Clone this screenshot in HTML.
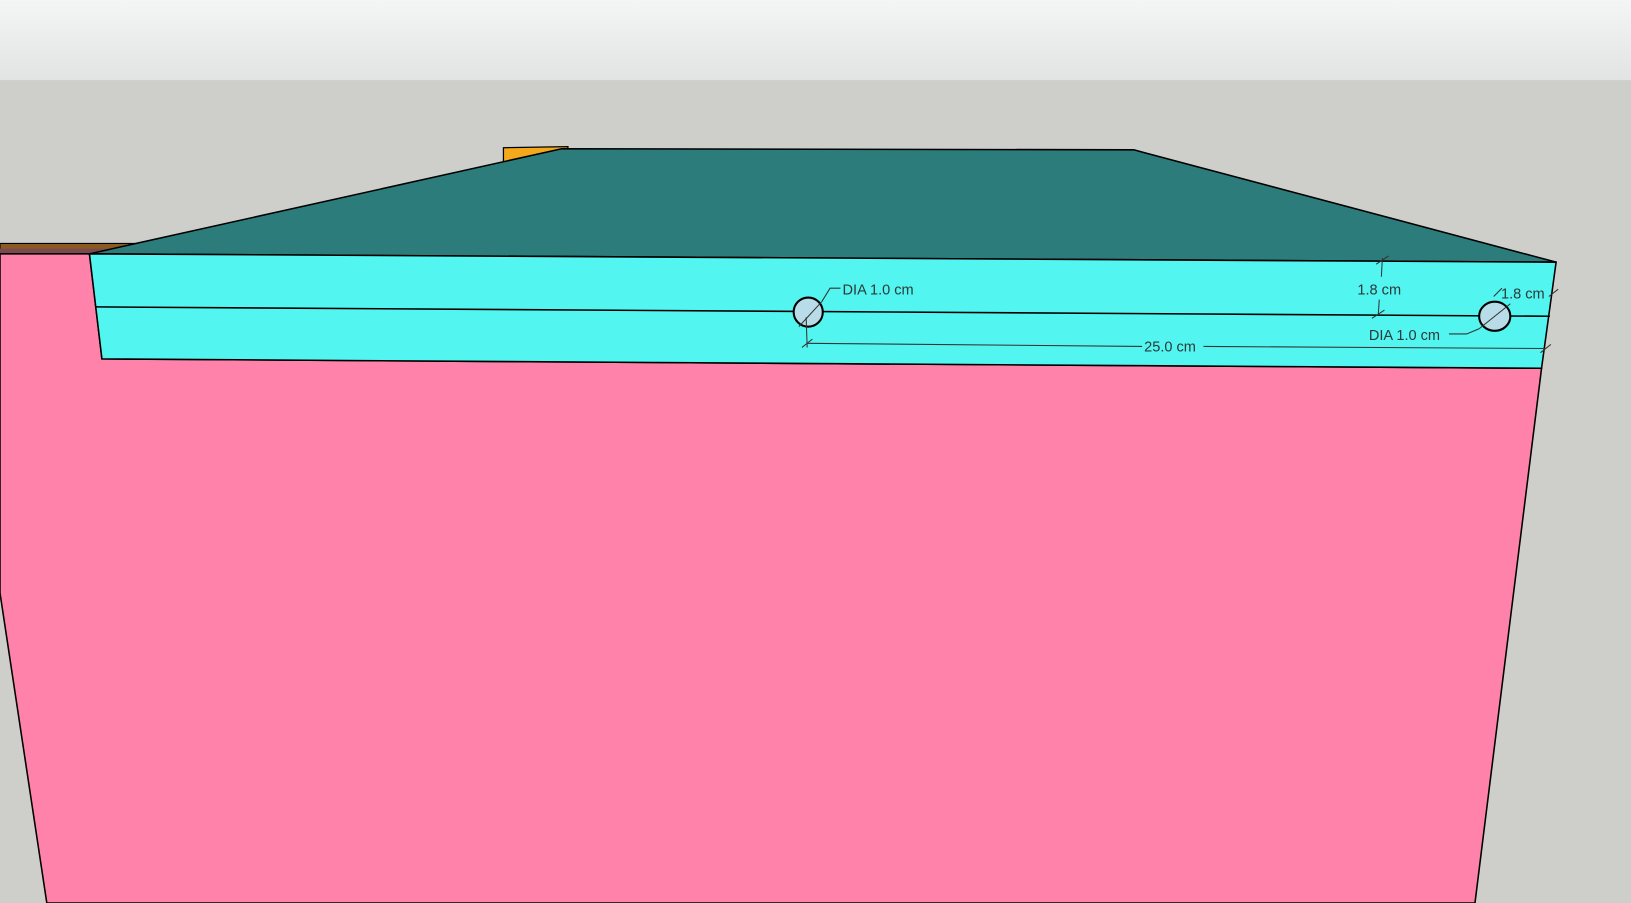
<!DOCTYPE html>
<html><head><meta charset="utf-8"><style>
html,body{margin:0;padding:0;width:1631px;height:903px;overflow:hidden;background:#cececa}
svg{display:block}
text{font-family:"Liberation Sans","DejaVu Sans",sans-serif;font-size:14px;fill:#2a3a3a}
</style></head><body>
<svg width="1631" height="903" viewBox="0 0 1568 868" preserveAspectRatio="none">
<defs><linearGradient id="g" x1="0" y1="0" x2="0" y2="1"><stop offset="0" stop-color="#f4f5f5"/><stop offset="1" stop-color="#e2e4e4"/></linearGradient></defs>
<rect x="0" y="0" width="1568" height="868" fill="#cececa"/>
<rect x="0" y="0" width="1568" height="77" fill="url(#g)"/>
<!-- orange piece -->
<polygon points="484,142 546,141 546,150 484,157" fill="#f4a81c" stroke="#000" stroke-width="1.2"/>
<!-- brown strip left -->
<polygon points="0,234 130,234 95,246 0,246" fill="#8a5a20" stroke="#000" stroke-width="1"/>
<polygon points="0,239 110,239 86,246 0,246" fill="#7a4a50"/>
<!-- pink body -->
<polygon points="0,244 86,244 98,345 1482,354 1418,868 45,868 0,570" fill="#ff82aa" stroke="#000" stroke-width="1.5"/>
<!-- teal top -->
<polygon points="86,244 540,143 1090,144 1496,252" fill="#2d7c7c" stroke="#000" stroke-width="1.5"/>
<!-- cyan slab -->
<polygon points="86,244 1496,252 1482,354 98,345" fill="#52f5ef" stroke="#000" stroke-width="1.5"/>
<line x1="92" y1="295" x2="1490" y2="304" stroke="#000" stroke-width="1.5"/>
<!-- holes -->
<circle cx="777" cy="300" r="14" fill="#b8dce8" stroke="#000" stroke-width="2"/>
<ellipse cx="1437" cy="304" rx="15" ry="14" fill="#b8dce8" stroke="#000" stroke-width="2"/>
<!-- dimension lines -->
<g stroke="#333" stroke-width="1" fill="none">
<line x1="768" y1="314" x2="790" y2="290"/><path d="M790,290 L798,277 L808,277"/>
<line x1="775" y1="305" x2="776" y2="334"/>
<line x1="776" y1="330" x2="1098" y2="333"/><line x1="1157" y1="333" x2="1486" y2="335"/>
<line x1="771" y1="334" x2="781" y2="326"/><line x1="1481" y1="339" x2="1491" y2="331"/>
<line x1="1329" y1="248" x2="1328" y2="266"/><line x1="1323" y1="254" x2="1335" y2="246"/>
<line x1="1326" y1="288" x2="1325" y2="303"/><line x1="1319" y1="306" x2="1331" y2="298"/>
<line x1="1422" y1="316" x2="1452" y2="292"/><path d="M1422,316 L1410,321 L1393,321"/>
<line x1="1489" y1="285" x2="1498" y2="278"/><line x1="1436" y1="285" x2="1444" y2="277"/>
</g>
<text x="810" y="283">DIA 1.0 cm</text>
<text x="1305" y="283">1.8 cm</text>
<text x="1443" y="287">1.8 cm</text>
<text x="1316" y="327">DIA 1.0 cm</text>
<text x="1100" y="338">25.0 cm</text>
</svg>
</body></html>
